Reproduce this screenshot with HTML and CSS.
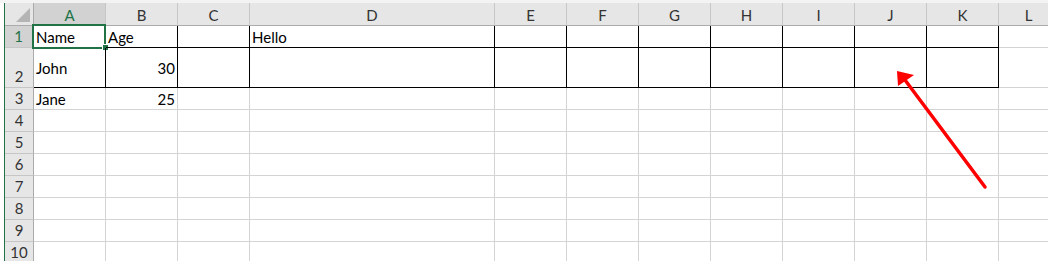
FILE: index.html
```html
<!DOCTYPE html>
<html lang="en">
<head>
  <meta charset="UTF-8">
  <title>Sheet1</title>
  <link rel="stylesheet" href="styles.css">
</head>
<body>
  <div class="top-strip"></div>
  <div class="sheet">
    <div class="gutter"></div>
    <div class="grid">
      <!-- column headers -->
      <div class="corner"><span class="corner-tri"></span></div>
      <div class="col-head active">A</div>
      <div class="col-head">B</div>
      <div class="col-head">C</div>
      <div class="col-head">D</div>
      <div class="col-head">E</div>
      <div class="col-head">F</div>
      <div class="col-head">G</div>
      <div class="col-head">H</div>
      <div class="col-head">I</div>
      <div class="col-head">J</div>
      <div class="col-head">K</div>
      <div class="col-head">L</div>

      <!-- row 1 -->
      <div class="row-head active">1</div>
      <div class="cell boxed selected">Name<span class="sel-frame"></span><span class="sel-handle"></span></div>
      <div class="cell boxed">Age</div>
      <div class="cell boxed"></div>
      <div class="cell boxed">Hello</div>
      <div class="cell boxed"></div>
      <div class="cell boxed"></div>
      <div class="cell boxed"></div>
      <div class="cell boxed"></div>
      <div class="cell boxed"></div>
      <div class="cell boxed"></div>
      <div class="cell boxed"></div>
      <div class="cell"></div>

      <!-- row 2 -->
      <div class="row-head">2</div>
      <div class="cell boxed">John</div>
      <div class="cell boxed num">30</div>
      <div class="cell boxed"></div>
      <div class="cell boxed"></div>
      <div class="cell boxed"></div>
      <div class="cell boxed"></div>
      <div class="cell boxed"></div>
      <div class="cell boxed"></div>
      <div class="cell boxed"></div>
      <div class="cell boxed"></div>
      <div class="cell boxed"></div>
      <div class="cell"></div>

      <!-- row 3 -->
      <div class="row-head">3</div>
      <div class="cell">Jane</div>
      <div class="cell num">25</div>
      <div class="cell"></div><div class="cell"></div><div class="cell"></div><div class="cell"></div>
      <div class="cell"></div><div class="cell"></div><div class="cell"></div><div class="cell"></div>
      <div class="cell"></div><div class="cell"></div>

      <div class="row-head">4</div>
      <div class="cell"></div><div class="cell"></div><div class="cell"></div><div class="cell"></div>
      <div class="cell"></div><div class="cell"></div><div class="cell"></div><div class="cell"></div>
      <div class="cell"></div><div class="cell"></div><div class="cell"></div><div class="cell"></div>

      <div class="row-head">5</div>
      <div class="cell"></div><div class="cell"></div><div class="cell"></div><div class="cell"></div>
      <div class="cell"></div><div class="cell"></div><div class="cell"></div><div class="cell"></div>
      <div class="cell"></div><div class="cell"></div><div class="cell"></div><div class="cell"></div>

      <div class="row-head">6</div>
      <div class="cell"></div><div class="cell"></div><div class="cell"></div><div class="cell"></div>
      <div class="cell"></div><div class="cell"></div><div class="cell"></div><div class="cell"></div>
      <div class="cell"></div><div class="cell"></div><div class="cell"></div><div class="cell"></div>

      <div class="row-head">7</div>
      <div class="cell"></div><div class="cell"></div><div class="cell"></div><div class="cell"></div>
      <div class="cell"></div><div class="cell"></div><div class="cell"></div><div class="cell"></div>
      <div class="cell"></div><div class="cell"></div><div class="cell"></div><div class="cell"></div>

      <div class="row-head">8</div>
      <div class="cell"></div><div class="cell"></div><div class="cell"></div><div class="cell"></div>
      <div class="cell"></div><div class="cell"></div><div class="cell"></div><div class="cell"></div>
      <div class="cell"></div><div class="cell"></div><div class="cell"></div><div class="cell"></div>

      <div class="row-head">9</div>
      <div class="cell"></div><div class="cell"></div><div class="cell"></div><div class="cell"></div>
      <div class="cell"></div><div class="cell"></div><div class="cell"></div><div class="cell"></div>
      <div class="cell"></div><div class="cell"></div><div class="cell"></div><div class="cell"></div>

      <div class="row-head">10</div>
      <div class="cell"></div><div class="cell"></div><div class="cell"></div><div class="cell"></div>
      <div class="cell"></div><div class="cell"></div><div class="cell"></div><div class="cell"></div>
      <div class="cell"></div><div class="cell"></div><div class="cell"></div><div class="cell"></div>
    </div>
  </div>

  <svg class="arrow" width="1048" height="261" viewBox="0 0 1048 261">
    <line x1="985" y1="187" x2="905" y2="80" stroke="#ff0000" stroke-width="3.5" stroke-linecap="round"/>
    <polygon points="897,71 914,75 898,86" fill="#ff0000"/>
  </svg>
</body>
</html>
```

FILE: styles.css
```css
body {
  margin: 0;
  background: #ffffff;
  font-family: Lato, 'Liberation Sans', sans-serif;
  font-size: 15px;
  color: #000;
  overflow: hidden;
  position: relative;
  height: 261px;
}

.top-strip {
  height: 3px;
  background: #f3f3f3;
}

.sheet {
  display: flex;
}

.gutter {
  width: 4px;
  border-right: 1px solid #217346;
  background: #ffffff;
  flex: none;
}

.grid {
  display: grid;
  grid-template-columns: 29px repeat(3, 72px) 245px repeat(7, 72px) 60px;
  grid-template-rows: 23px 22px 40px repeat(8, 22px);
}

.corner,
.col-head,
.row-head {
  background: #e6e6e6;
  color: #333;
  box-sizing: border-box;
  display: flex;
  justify-content: center;
}

.corner {
  border-right: 1px solid #ababab;
  border-bottom: 1px solid #ababab;
  position: relative;
}

.corner-tri {
  position: absolute;
  right: 3px;
  bottom: 3px;
  width: 0;
  height: 0;
  border-left: 14px solid transparent;
  border-bottom: 14px solid #b4b4b4;
}

.col-head {
  border-right: 1px solid #c6c6c6;
  border-bottom: 1px solid #ababab;
  align-items: center;
  padding-top: 1px;
}

.col-head.active {
  background: #d2d2d2;
  color: #217346;
  border-bottom: 2px solid #217346;
  padding-top: 2px;
}

.row-head {
  border-right: 1px solid #ababab;
  border-bottom: 1px solid #c6c6c6;
  align-items: flex-end;
  padding-bottom: 1px;
  line-height: 20px;
}

.row-head.active {
  background: #d2d2d2;
  color: #217346;
  border-right: 2px solid #217346;
}

.cell {
  box-sizing: border-box;
  border-right: 1px solid #d4d4d4;
  border-bottom: 1px solid #d4d4d4;
  padding: 0 2px;
  display: flex;
  align-items: center;
  white-space: nowrap;
  position: relative;
}

.cell.num {
  justify-content: flex-end;
}

.cell.boxed {
  border-right-color: #000;
  border-bottom-color: #000;
}

.sel-frame {
  position: absolute;
  left: -2px;
  top: -2px;
  right: -1px;
  bottom: -2px;
  border: 2px solid #217346;
  pointer-events: none;
}

.sel-handle {
  position: absolute;
  right: -3px;
  bottom: -3px;
  width: 5px;
  height: 5px;
  background: #217346;
  box-shadow: 0 0 0 1px #ffffff;
}

.arrow {
  position: absolute;
  left: 0;
  top: 0;
  pointer-events: none;
}
```
